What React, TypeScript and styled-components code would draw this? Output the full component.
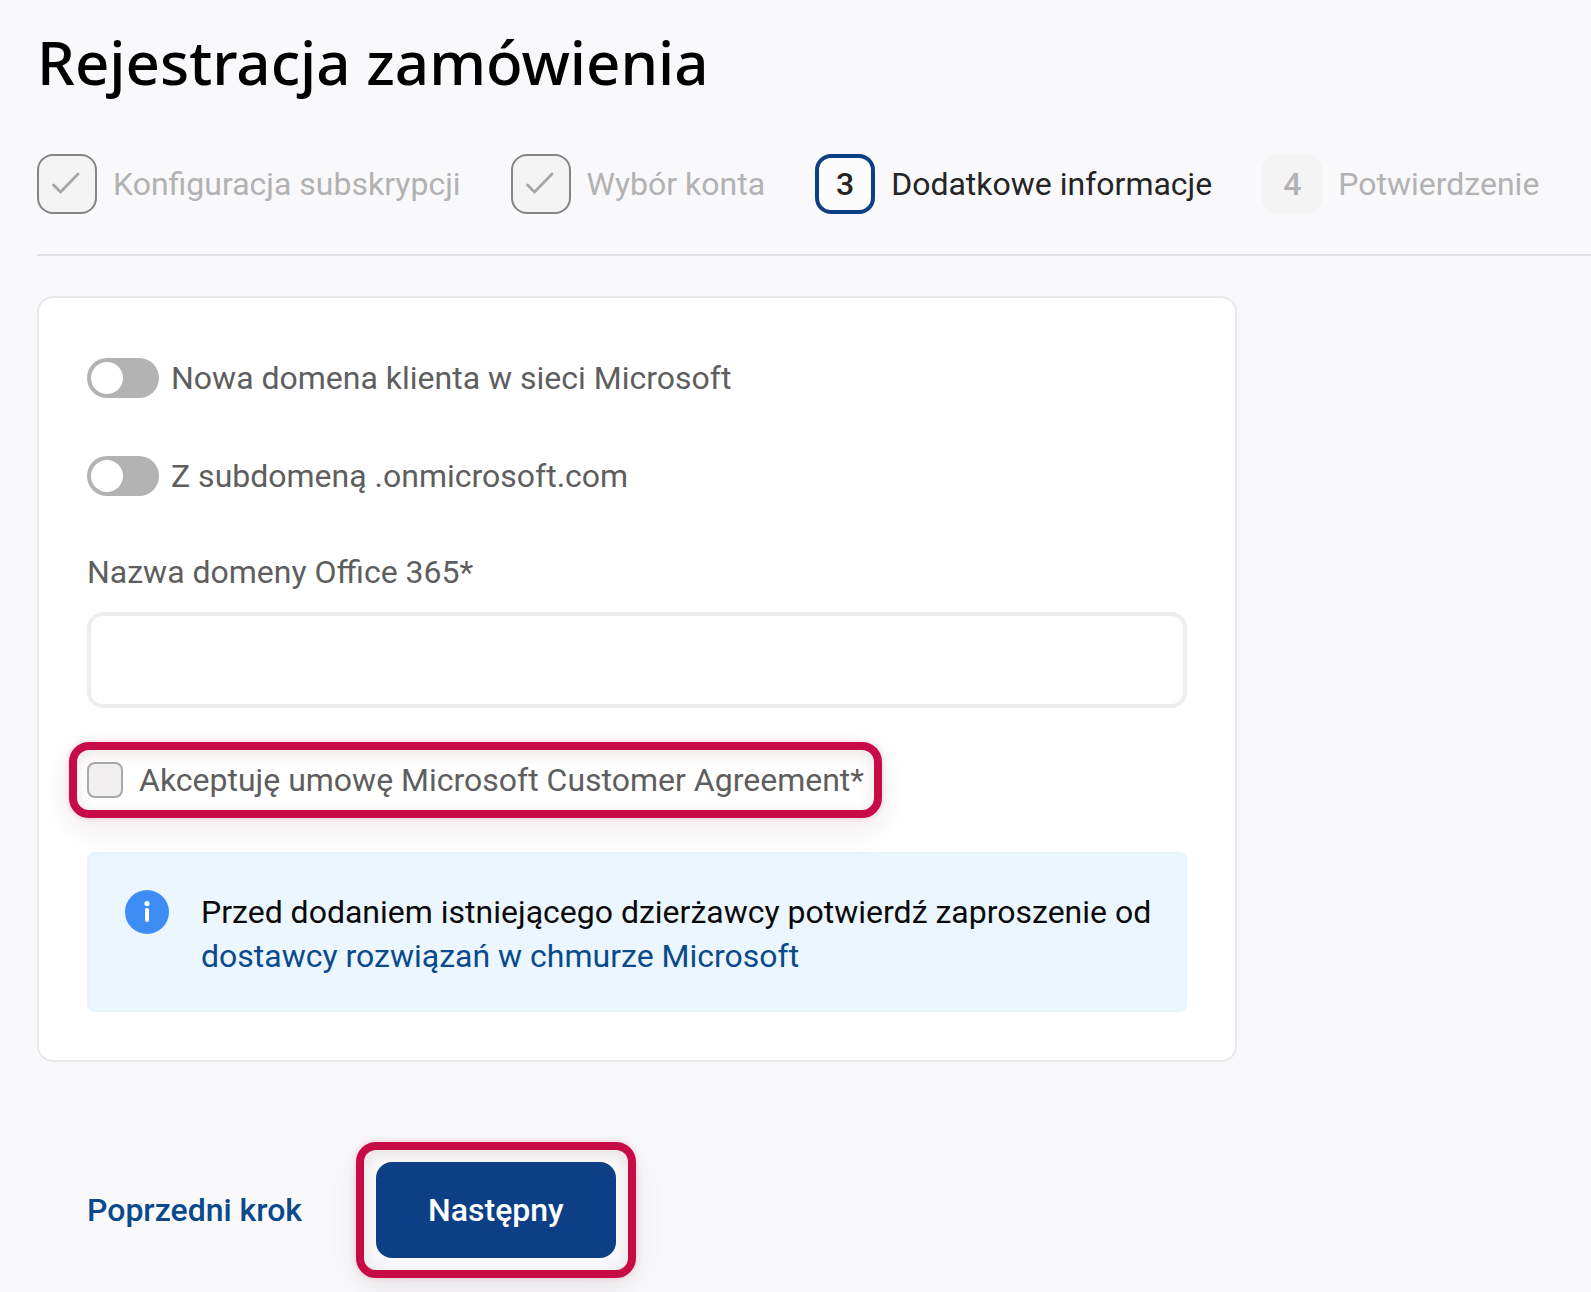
import React, { useState } from "react";
import styled, { createGlobalStyle, css } from "styled-components";

const color = {
  page: "#f9f9fb",
  line: "#e1e1e4",
  navy: "#0d3f87",
  link: "#0a4a8c",
  text: "#5e5e5e",
  muted: "#b2b2b2",
  accent: "#c60b46",
};

const GlobalStyle = createGlobalStyle`
  *, *::before, *::after { box-sizing: border-box; }
  body {
    margin: 0;
    background: ${color.page};
    font-family: Roboto, "Noto Sans", sans-serif;
    font-size: 32px;
    font-weight: 400;
    line-height: 44px;
    color: ${color.text};
  }
`;

const Page = styled.main`
  padding: 22px 0 14px 37px;
`;

const Title = styled.h1`
  margin: 0;
  font: 500 60px/80px "Noto Sans", sans-serif;
  color: #000;
`;

const Steps = styled.ol`
  display: flex;
  gap: 50px;
  margin: 0;
  padding: 52px 0 40px;
  list-style: none;
  border-bottom: 2px solid ${color.line};
`;

type StepState = "done" | "current" | "upcoming";

const Step = styled.li<{ $state: StepState }>`
  display: flex;
  align-items: center;
  gap: 16px;
  white-space: nowrap;
  color: ${(p) => (p.$state === "current" ? "#242424" : color.muted)};
`;

const StepMark = styled.span<{ $state: StepState }>`
  display: flex;
  flex: none;
  align-items: center;
  justify-content: center;
  width: 60px;
  height: 60px;
  border-radius: 16px;
  background: #f4f4f5;
  font-weight: 500;
  ${(p) => p.$state === "done" && css`border: 2px solid #858585;`}
  ${(p) => p.$state === "current" && css`border: 4px solid ${color.navy}; background: #fbfbfc;`}
`;

const Form = styled.form`
  margin: 0;
`;

const Card = styled.section`
  display: flex;
  flex-direction: column;
  max-width: 1200px;
  margin-top: 40px;
  padding: 60px 48px 48px;
  border: 2px solid #e8e8ea;
  border-radius: 16px;
  background: #fff;
`;

const SwitchRow = styled.label`
  display: flex;
  align-items: center;
  gap: 12px;
  height: 40px;
  margin-bottom: 58px;
`;

const Switch = styled.input`
  appearance: none;
  flex: none;
  width: 72px;
  height: 40px;
  margin: 0;
  padding: 4px;
  border-radius: 20px;
  background: #b3b3b3;
  cursor: pointer;

  &::before {
    content: "";
    display: block;
    width: 32px;
    height: 32px;
    border-radius: 50%;
    background: #fff;
  }
  &:checked { background: ${color.navy}; }
  &:checked::before { margin-left: 32px; }
`;

const FieldLabel = styled.label`
  margin: -4px 0 18px;
`;

const TextField = styled.input`
  width: 100%;
  height: 96px;
  padding: 0 24px;
  border: 4px solid #eeeeef;
  border-radius: 16px;
  background: #fff;
  font: inherit;
  color: inherit;
`;

const Highlight = styled.div`
  width: fit-content;
  border: 8px solid ${color.accent};
  border-radius: 20px;
  box-shadow:
    0 0 6px rgba(198, 11, 70, 0.16),
    0 10px 30px rgba(90, 40, 50, 0.1),
    inset 0 4px 16px rgba(110, 40, 40, 0.12);
`;

const ConsentHighlight = styled(Highlight)`
  margin: 34px 0 34px -18px;
  padding: 8px 10px;
`;

const Consent = styled.label`
  display: flex;
  align-items: center;
  gap: 16px;
`;

const Checkbox = styled.input`
  appearance: none;
  flex: none;
  display: grid;
  place-items: center;
  width: 36px;
  height: 36px;
  margin: 0;
  border: 2px solid #a8a8a8;
  border-radius: 8px;
  background: #f2eff1;

  &:checked::before {
    content: "";
    width: 20px;
    height: 20px;
    border-radius: 4px;
    background: ${color.navy};
  }
`;

const Notice = styled.aside`
  display: flex;
  gap: 32px;
  padding: 36px 24px 32px 36px;
  border: 2px solid #e8f3fb;
  border-radius: 8px;
  background: #ebf6fe;
  color: #0a0a0a;

  svg { flex: none; }
  p { margin: 0; }
  a { display: block; color: ${color.link}; text-decoration: none; }
`;

const Actions = styled.div`
  display: flex;
  align-items: center;
  gap: 54px;
  margin-top: 80px;
  padding-left: 50px;
`;

const Button = styled.button`
  padding: 0;
  border: 0;
  background: none;
  font: inherit;
  font-weight: 500;
  color: ${color.link};
  cursor: pointer;
`;

const PrimaryButton = styled(Button)`
  display: block;
  height: 96px;
  padding: 0 52px;
  border-radius: 16px;
  background: ${color.navy};
  color: #fff;
`;

const ActionHighlight = styled(Highlight)`
  padding: 12px;
`;

const CheckIcon = () => (
  <svg width="32" height="32" viewBox="0 0 32 32" fill="none" aria-hidden="true">
    <path d="M2.5 17 9.5 24 27 6" stroke="#a6a6a6" strokeWidth="2.8" strokeLinecap="round" />
  </svg>
);

const InfoIcon = () => (
  <svg width="44" height="44" viewBox="0 0 44 44" aria-hidden="true">
    <circle cx="22" cy="22" r="22" fill="#3d8df5" />
    <circle cx="22" cy="13.5" r="2.6" fill="#fff" />
    <rect x="20" y="18" width="4" height="14" rx="2" fill="#fff" />
  </svg>
);

const steps: { label: string; state: StepState }[] = [
  { label: "Konfiguracja subskrypcji", state: "done" },
  { label: "Wybór konta", state: "done" },
  { label: "Dodatkowe informacje", state: "current" },
  { label: "Potwierdzenie", state: "upcoming" },
];

export default function App() {
  const [domain, setDomain] = useState("");

  return (
    <Page>
      <GlobalStyle />
      <Title>Rejestracja zamówienia</Title>
      <Steps>
        {steps.map(({ label, state }, i) => (
          <Step key={label} $state={state} aria-current={state === "current" ? "step" : undefined}>
            <StepMark $state={state}>{state === "done" ? <CheckIcon /> : i + 1}</StepMark>
            {label}
          </Step>
        ))}
      </Steps>
      <Form onSubmit={(e) => e.preventDefault()}>
        <Card>
          <SwitchRow>
            <Switch type="checkbox" role="switch" />
            Nowa domena klienta w sieci Microsoft
          </SwitchRow>
          <SwitchRow>
            <Switch type="checkbox" role="switch" />
            Z subdomeną .onmicrosoft.com
          </SwitchRow>
          <FieldLabel htmlFor="domain">Nazwa domeny Office 365*</FieldLabel>
          <TextField id="domain" type="text" value={domain} onChange={(e) => setDomain(e.target.value)} />
          <ConsentHighlight>
            <Consent>
              <Checkbox type="checkbox" />
              Akceptuję umowę Microsoft Customer Agreement*
            </Consent>
          </ConsentHighlight>
          <Notice>
            <InfoIcon />
            <p>
              Przed dodaniem istniejącego dzierżawcy potwierdź zaproszenie od{" "}
              <a href="#zaproszenie">dostawcy rozwiązań w chmurze Microsoft</a>
            </p>
          </Notice>
        </Card>
        <Actions>
          <Button type="button">Poprzedni krok</Button>
          <ActionHighlight>
            <PrimaryButton type="submit">Następny</PrimaryButton>
          </ActionHighlight>
        </Actions>
      </Form>
    </Page>
  );
}
